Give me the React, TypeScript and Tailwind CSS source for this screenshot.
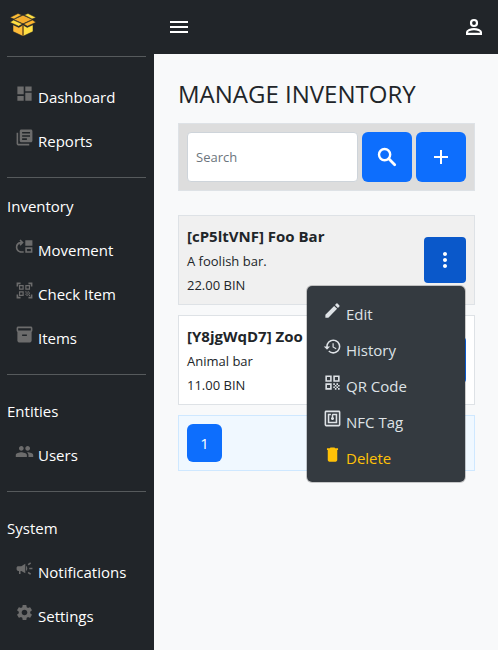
import type { ReactNode } from "react";
import {
  MdAdd,
  MdCampaign,
  MdDashboard,
  MdEdit,
  MdHistory,
  MdInventory2,
  MdLibraryBooks,
  MdMenu,
  MdMoreVert,
  MdMoveUp,
  MdNfc,
  MdPeople,
  MdQrCode,
  MdQrCodeScanner,
  MdSettings,
} from "react-icons/md";

type Icon = (props: { className?: string }) => ReactNode;

function BoxLogo() {
  return (
    <svg
      viewBox="0 0 26 23"
      className="block h-[23px] w-[26px]"
      stroke="#212529"
      strokeWidth=".5"
      role="img"
      aria-label="Home"
    >
      <path d="M3.6 6.4 13 2.2l9.4 4.2L13 10.8z" fill="#f3ad2e" />
      <path d="M0 4.5 8 .5l3.8 1.4L4 6z" fill="#fdbd35" />
      <path d="M26 4.5 18 .5l-3.8 1.4L22 6z" fill="#ffdf43" />
      <path d="M3.6 7 0 9.3 8.6 13.2l3.8-2.2z" fill="#ffdf43" />
      <path d="M22.4 7 26 9.3 17.4 13.2l-3.8-2.2z" fill="#fdb52f" />
      <path d="M3 11.8 8.8 14.4l3.7-2.1V23L3 18.6z" fill="#fdbb38" />
      <path d="M23 11.8l-5.8 2.6-3.7-2.1V23L23 18.6z" fill="#ffdf43" />
      <path d="M12.5 12.3h1V23h-1z" fill="#c98a1c" stroke="none" />
    </svg>
  );
}

function TrashIcon({ className }: { className?: string }) {
  return (
    <svg viewBox="0 0 24 24" fill="currentColor" className={className} aria-hidden="true">
      <path d="M5 4h3.5l1-1h5l1 1H19v2.2h-1V19c0 1.1-.9 2-2 2H8c-1.100 0-2-.9-2-2V6.200H5z" />
    </svg>
  );
}

function SearchIcon({ className }: { className?: string }) {
  return (
    <svg
      viewBox="0 0 24 24"
      fill="none"
      stroke="currentColor"
      strokeWidth="2.4"
      className={className}
      aria-hidden="true"
    >
      <circle cx="9.6" cy="9.600" r="5.600" />
      <path d="m13.800 13.800 5.900 5.900" strokeWidth="2.800" strokeLinecap="round" />
    </svg>
  );
}

function PersonIcon({ className }: { className?: string }) {
  return (
    <svg
      viewBox="0 0 24 24"
      fill="none"
      stroke="currentColor"
      strokeWidth="2.200"
      className={className}
      aria-hidden="true"
    >
      <circle cx="12" cy="8" r="3" />
      <path d="M12 14.100c-3.200 0-6.900 1.500-6.900 3v1.800h13.800v-1.800c0-1.500-3.700-3-6.900-3z" />
    </svg>
  );
}

function NavItem({ icon: Icon, children }: { icon: Icon; children: ReactNode }) {
  return (
    <li>
      <a href="#" className="flex h-11 items-baseline gap-1 pt-2 pl-2 leading-7 text-white">
        <Icon className="size-[19px] shrink-0 text-[#6c6c6c]" />
        {children}
      </a>
    </li>
  );
}

function NavHeading({ children }: { children: ReactNode }) {
  return <h2 className="h-11 pt-2 leading-7 text-white">{children}</h2>;
}

function Divider() {
  return <hr className="my-[14px] border-[#565a5c]" />;
}

function Sidebar() {
  return (
    <nav aria-label="Main" className="w-[154px] shrink-0 bg-[#212529] pr-2 pl-[7px] text-[15px]">
      <a href="#" className="block pt-[13px] pl-[3px]">
        <BoxLogo />
      </a>
      <hr className="mt-5 mb-[18px] border-[#565a5c]" />
      <ul>
        <NavItem icon={MdDashboard}>Dashboard</NavItem>
        <NavItem icon={MdLibraryBooks}>Reports</NavItem>
      </ul>
      <hr className="mt-[14px] mb-[6px] border-[#565a5c]" />
      <NavHeading>Inventory</NavHeading>
      <ul>
        <NavItem icon={MdMoveUp}>Movement</NavItem>
        <NavItem icon={MdQrCodeScanner}>Check Item</NavItem>
        <NavItem icon={MdInventory2}>Items</NavItem>
      </ul>
      <Divider />
      <NavHeading>Entities</NavHeading>
      <ul>
        <NavItem icon={MdPeople}>Users</NavItem>
      </ul>
      <Divider />
      <NavHeading>System</NavHeading>
      <ul>
        <NavItem icon={MdCampaign}>Notifications</NavItem>
        <NavItem icon={MdSettings}>Settings</NavItem>
      </ul>
    </nav>
  );
}

function MenuItem({ icon: Icon, warn, children }: { icon: Icon; warn?: boolean; children: ReactNode }) {
  return (
    <button
      type="button"
      role="menuitem"
      className={`flex h-9 w-full items-baseline gap-1 px-4 pt-[6px] text-left leading-7 ${warn ? "text-[#ffc107]" : "text-[#dee2e6]"}`}
    >
      <Icon className="size-[19px] shrink-0" />
      {children}
    </button>
  );
}

function ActionMenu() {
  return (
    <div
      role="menu"
      className="absolute top-full right-0 z-10 mt-[2px] w-[160px] rounded-md border border-black/20 bg-[#343a40] bg-clip-padding pt-2 pb-2 text-[15px]"
    >
      <MenuItem icon={MdEdit}>Edit</MenuItem>
      <MenuItem icon={MdHistory}>History</MenuItem>
      <MenuItem icon={MdQrCode}>QR Code</MenuItem>
      <MenuItem icon={MdNfc}>NFC Tag</MenuItem>
      <MenuItem icon={TrashIcon} warn>
        Delete
      </MenuItem>
    </div>
  );
}

type Item = { code: string; name: string; description: string; stock: string };

const items: Item[] = [
  { code: "cP5ltVNF", name: "Foo Bar", description: "A foolish bar.", stock: "22.00 BIN" },
  { code: "Y8jgWqD7", name: "Zoo Bar", description: "Animal bar", stock: "11.00 BIN" },
];

function ItemCard({ item, open }: { item: Item; open: boolean }) {
  return (
    <li
      className={`flex h-[90px] items-center justify-between border border-[#dee2e6] px-2 ${open ? "bg-[#f0f0f0]" : "bg-white"}`}
    >
      <div className="text-[13px] leading-6">
        <h2 className="text-[15px] leading-[26px] font-bold">
          [{item.code}] {item.name}
        </h2>
        <p>{item.description}</p>
        <p>{item.stock}</p>
      </div>
      <div className="relative">
        <button
          type="button"
          aria-label="Actions"
          aria-expanded={open}
          className={`flex h-[46px] w-[42px] items-center justify-center rounded text-white ${open ? "bg-[#0a58ca]" : "bg-[#0d6efd]"}`}
        >
          <MdMoreVert className="size-6" />
        </button>
        {open && <ActionMenu />}
      </div>
    </li>
  );
}

export default function App() {
  return (
    <div className="flex min-h-screen bg-[#f8f9fa] font-['Open_Sans','Noto_Sans',sans-serif] text-[#212529]">
      <Sidebar />
      <div className="min-w-0 flex-1">
        <header className="flex h-[54px] items-center justify-between bg-[#212529] pr-3 pl-[13px] text-white">
          <button type="button" aria-label="Toggle menu">
            <MdMenu className="size-6" />
          </button>
          <button type="button" aria-label="Account">
            <PersonIcon className="size-6" />
          </button>
        </header>
        <main className="pt-6 pr-[23px] pl-6">
          <h1 className="text-[24px] leading-8 font-medium">MANAGE INVENTORY</h1>
          <form className="mt-[13px] flex gap-1 border border-[#dee2e6] bg-[#ddd] p-2">
            <input
              type="search"
              aria-label="Search"
              placeholder="Search"
              className="h-[50px] min-w-0 flex-1 rounded border border-[#ced4da] bg-white px-2 text-[13px] placeholder:text-[#6c757d]"
            />
            <button
              type="button"
              aria-label="Search items"
              className="flex size-[50px] items-center justify-center rounded-md bg-[#0d6efd] text-white"
            >
              <SearchIcon className="size-6" />
            </button>
            <button
              type="button"
              aria-label="Add item"
              className="flex size-[50px] items-center justify-center rounded-md bg-[#0d6efd] text-white"
            >
              <MdAdd className="size-6" />
            </button>
          </form>
          <ul className="mt-6 flex flex-col gap-[10px]">
            {items.map((item, i) => (
              <ItemCard key={item.code} item={item} open={i === 0} />
            ))}
          </ul>
          <div className="mt-[10px] border border-[#cfe8ff] bg-[#f0f8ff] p-2">
            <button
              type="button"
              aria-current="page"
              className="h-[38px] w-[35px] rounded-md bg-[#0d6efd] text-[15px] text-white"
            >
              1
            </button>
          </div>
        </main>
      </div>
    </div>
  );
}
